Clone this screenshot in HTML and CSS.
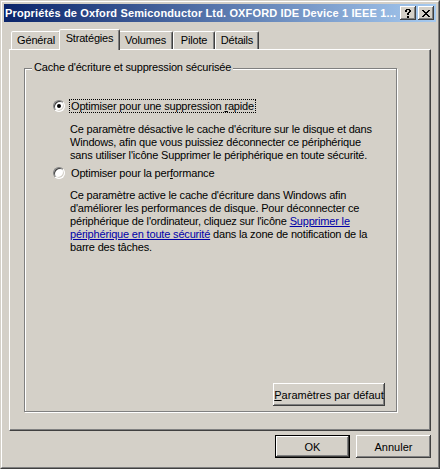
FILE: index.html
```html
<!DOCTYPE html>
<html lang="fr">
<head>
  <meta charset="utf-8" />
  <title>Propriétés de Oxford Semiconductor Ltd. OXFORD IDE Device 1 IEEE 1394 SBP2 Device</title>
  <link rel="stylesheet" href="styles.css">
</head>
<body>

  <div class="window">
    <div class="frame">

      <div class="titlebar">
        <span class="title">Propriétés de Oxford Semiconductor Ltd. OXFORD IDE Device 1 IEEE 1...</span>
        <div class="title-buttons">
          <button class="tbtn" title="Aide">
            <svg width="6" height="9" viewBox="0 0 6 9" shape-rendering="crispEdges"><path d="M1 0h4v1H1zM0 1h2v2H0zM4 1h2v2H4zM3 3h2v1H3zM2 4h2v2H2zM2 7h2v2H2z" fill="#000"/></svg>
          </button>
          <button class="tbtn" title="Fermer">
            <svg width="8" height="7" viewBox="0 0 8 7" shape-rendering="crispEdges"><path d="M0 0h2v1H0zM6 0h2v1H6zM1 1h2v1H1zM5 1h2v1H5zM2 2h4v1H2zM3 3h2v1H3zM2 4h4v1H2zM1 5h2v1H1zM5 5h2v1H5zM0 6h2v1H0zM6 6h2v1H6z" fill="#000"/></svg>
          </button>
        </div>
      </div>

      <div class="client">
        <div class="tabs">
          <div class="tab tab-general">Général</div>
          <div class="tab tab-strategies active">Stratégies</div>
          <div class="tab tab-volumes">Volumes</div>
          <div class="tab tab-pilote">Pilote</div>
          <div class="tab tab-details">Détails</div>
        </div>

        <div class="panel">
          <div class="group">
            <span class="group-label">Cache d'écriture et suppression sécurisée</span>

            <div class="option">
              <span class="radio checked"></span>
              <span class="option-label focus">Optimiser pour une suppression <u>r</u>apide</span>
            </div>
            <p class="desc desc-first">Ce paramètre désactive le cache d'écriture sur le disque et dans<br>
              Windows, afin que vous puissiez déconnecter ce périphérique<br>
              sans utiliser l'icône Supprimer le périphérique en toute sécurité.</p>

            <div class="option option-second">
              <span class="radio"></span>
              <span class="option-label">Optimiser pour la per<u>f</u>ormance</span>
            </div>
            <p class="desc">Ce paramètre active le cache d'écriture dans Windows afin<br>
              d'améliorer les performances de disque. Pour déconnecter ce<br>
              périphérique de l'ordinateur, cliquez sur l'icône <a href="#">Supprimer le<br>
              périphérique en toute sécurité</a> dans la zone de notification de la<br>
              barre des tâches.</p>

            <div class="group-actions">
              <button class="btn btn-wide"><u>P</u>aramètres par défaut</button>
            </div>
          </div>
        </div>

        <div class="actions">
          <button class="btn default">OK</button>
          <button class="btn">Annuler</button>
        </div>
      </div>

    </div>
  </div>

</body>
</html>
```

FILE: styles.css
```css
:root {
  --face:   #d4d0c8;
  --light:  #ffffff;
  --shadow: #808080;
  --dark:   #404040;
  --link:   #0000a8;
}
*, *::before, *::after { box-sizing: border-box; margin:0; padding:0; }
body {
  background: var(--face);
  font-family: "Liberation Sans", Arial, sans-serif;
  font-size: 11px;
  letter-spacing: -0.18px;
  color: #000;
}

/* window frame */
.window {
  width:440px;height:469px;
  border:1px solid;
  border-color:var(--face) var(--dark) var(--dark) var(--face);
}
.frame {
  height:100%;
  border:1px solid;
  border-color:var(--light) var(--shadow) var(--shadow) var(--light);
  padding:2px;
  display:flex;flex-direction:column;
}

.titlebar {
  flex:none;height:18px;
  display:flex;align-items:center;
  padding:0 2px 0 1px;
  background:linear-gradient(90deg,#0a246a,#a6caf0);
}
.title {
  flex:1;min-width:0;
  color:#fff;font-weight:bold;font-size:11px;
  letter-spacing:0.14px;
  white-space:nowrap;overflow:hidden;
}
.title-buttons { display:flex;gap:2px; }
.tbtn {
  width:16px;height:14px;border:none;
  display:flex;align-items:center;justify-content:center;
  background:var(--face);
  box-shadow:inset -1px -1px var(--dark), inset 1px 1px var(--light),
             inset -2px -2px var(--shadow), inset 2px 2px var(--face);
}

.client {
  flex:1;
  display:flex;flex-direction:column;
  padding:7px 5px;
}

/* tabs */
.tabs {
  flex:none;height:20px;
  display:flex;align-items:flex-end;
  padding-left:2px;
}
.tab {
  height:18px;
  border:1px solid;border-bottom:none;
  border-color:var(--light) var(--dark) transparent var(--light);
  border-radius:2px 2px 0 0;
  box-shadow:inset -1px 0 var(--shadow);
  padding-top:2px;line-height:13px;
  text-align:center;white-space:nowrap;
  background:var(--face);
}
.tab-general    { width:50px; }
.tab-strategies { width:57px; }
.tab-volumes    { width:55px; }
.tab-pilote     { width:42px; }
.tab-details    { width:44px; }
.tab.active {
  position:relative;z-index:1;
  width:61px;height:21px;
  margin:0 -2px -1px;
  padding-top:2px;
}

.panel {
  flex:1;
  border:1px solid;
  border-color:var(--light) var(--dark) var(--dark) var(--light);
  box-shadow:inset -1px -1px var(--shadow);
  padding:18px 0 0 14px;
}

/* group box */
.group {
  position:relative;
  width:373px;height:344px;
  border:1px solid var(--shadow);
  box-shadow:1px 1px 0 var(--light), inset 1px 1px 0 var(--light);
  padding:30px 11px 5px 28px;
  display:flex;flex-direction:column;
}
.group-label {
  position:absolute;left:7px;top:-8px;
  padding:0 2px;line-height:13px;
  background:var(--face);
  white-space:nowrap;
}

.option { display:flex;align-items:center;height:14px; }
.option-second { margin-top:4px; }
.radio {
  position:relative;
  width:12px;height:12px;flex:none;
  border-radius:50%;
  background:#fff;
  border:1px solid;
  border-color:var(--shadow) var(--light) var(--light) var(--shadow);
  box-shadow:inset 1px 1px var(--dark), inset -1px -1px var(--face);
  margin-right:4px;
}
.radio.checked::after {
  content:"";position:absolute;
  left:3px;top:3px;width:4px;height:4px;
  border-radius:50%;background:#000;
}
.option-label {
  border:1px solid transparent;
  padding:0 1px;line-height:12px;
  white-space:nowrap;
}
.option-label.focus { border:1px dotted #000; }

.desc {
  margin:9px 0 0 17px;
  line-height:13px;
  white-space:nowrap;
}
.desc-first { margin-top:10px; }
.desc a { color:var(--link); }

.group-actions {
  margin-top:auto;
  display:flex;justify-content:flex-end;
}

/* buttons */
.btn {
  width:75px;height:23px;
  border:none;
  font:inherit;color:#000;
  background:var(--face);
  box-shadow:inset -1px -1px var(--dark), inset 1px 1px var(--light),
             inset -2px -2px var(--shadow), inset 2px 2px var(--face);
}
.btn-wide { width:112px; }
.btn.default {
  border:1px solid #000;
}

.actions {
  flex:none;
  display:flex;justify-content:flex-end;gap:6px;
  margin-top:4px;
}
```
